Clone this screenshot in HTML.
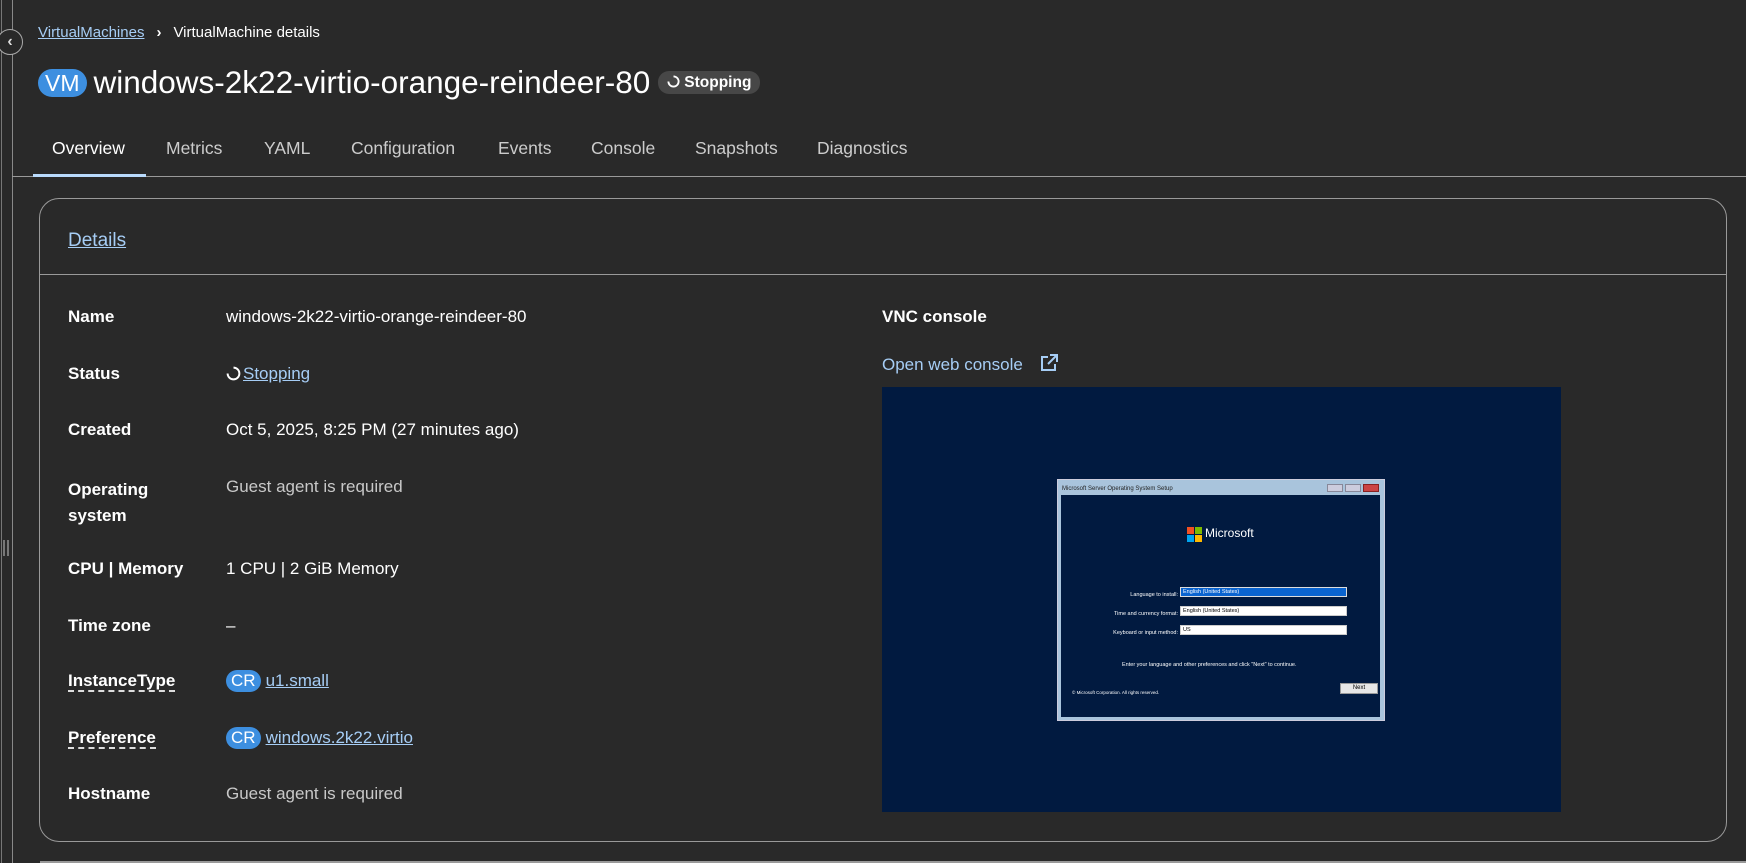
<!DOCTYPE html>
<html><head><meta charset="utf-8"><style>
*{margin:0;padding:0;box-sizing:border-box}
body{width:1746px;height:863px;background:#292929;font-family:"Liberation Sans",sans-serif;color:#fff;position:relative;overflow:hidden}
.a{position:absolute;white-space:nowrap}
.lbl{font-weight:bold;font-size:17px;left:68px}
.val{font-size:17px;left:226px}
.link{color:#a6cdf5;text-decoration:underline}
.cr{display:inline-block;background:#3d8fe0;color:#fff;border-radius:12px;padding:0 5px;font-size:17px;line-height:22px;margin-right:5px}
.dash{border-bottom:2px dashed #ddd}
.tab{font-size:17.5px;color:#ccc;top:138px}
</style></head><body>
<div class="a" style="left:1px;top:0;width:1px;height:863px;background:#777"></div>
<div class="a" style="left:12px;top:0;width:1px;height:863px;background:#888"></div>
<div class="a" style="left:-3px;top:29px;width:26px;height:26px;border:1px solid #aaa;border-radius:50%;background:#292929;font-size:16px;font-weight:bold;text-align:center;line-height:23px;color:#ddd">&#8249;</div>
<div class="a" style="left:3px;top:540px;height:16px;border-left:2px solid #777;border-right:2px solid #777;width:6px"></div>

<div class="a" style="left:38px;top:24px;font-size:15px"><span class="link">VirtualMachines</span><span style="margin:0 12px;font-weight:bold">&#8250;</span>VirtualMachine details</div>
<div class="a" style="left:38px;top:64px;display:flex;align-items:center">
<span style="background:#3d8fe0;border-radius:14px;font-size:23px;padding:0 7px;line-height:28px;margin-right:7px">VM</span>
<span style="font-size:31.5px">windows-2k22-virtio-orange-reindeer-80</span>
<span style="background:#474747;border-radius:11px;font-size:15.5px;padding:0 9px;line-height:23px;margin-left:8px;font-weight:bold"><svg width="13" height="13" viewBox="0 0 14 14" style="vertical-align:-1px;margin-right:4px"><path d="M7 1.5A5.5 5.5 0 1 1 1.5 7" fill="none" stroke="#fff" stroke-width="2"/></svg>Stopping</span></div>

<div class="a tab" style="left:52px;color:#fff">Overview</div>
<div class="a tab" style="left:166px">Metrics</div>
<div class="a tab" style="left:264px">YAML</div>
<div class="a tab" style="left:351px">Configuration</div>
<div class="a tab" style="left:498px">Events</div>
<div class="a tab" style="left:591px">Console</div>
<div class="a tab" style="left:695px">Snapshots</div>
<div class="a tab" style="left:817px">Diagnostics</div>
<div class="a" style="left:12px;top:176px;width:1734px;height:1px;background:#999"></div>
<div class="a" style="left:33px;top:174px;width:113px;height:3px;background:#b9dafc"></div>

<div class="a" style="left:39px;top:198px;width:1688px;height:644px;border:1px solid #999;border-radius:20px"></div>
<div class="a link" style="left:68px;top:230px;font-size:19px">Details</div>
<div class="a" style="left:40px;top:274px;width:1686px;height:1px;background:#999"></div>
<div class="a" style="left:40px;top:861px;width:1706px;height:2px;background:#999"></div>

<div class="a lbl" style="top:307px">Name</div><div class="a val" style="top:307px">windows-2k22-virtio-orange-reindeer-80</div>
<div class="a lbl" style="top:364px">Status</div><div class="a val" style="top:364px"><svg width="15" height="15" viewBox="0 0 14 14" style="vertical-align:-2px;margin-right:2px"><path d="M7 1.5A5.5 5.5 0 1 1 1.5 7" fill="none" stroke="#fff" stroke-width="1.8"/></svg><span class="link">Stopping</span></div>
<div class="a lbl" style="top:420px">Created</div><div class="a val" style="top:420px">Oct 5, 2025, 8:25 PM (27 minutes ago)</div>
<div class="a lbl" style="top:477px;line-height:26px">Operating<br>system</div><div class="a val" style="top:477px;color:#c8c8c8">Guest agent is required</div>
<div class="a lbl" style="top:559px">CPU | Memory</div><div class="a val" style="top:559px">1 CPU | 2 GiB Memory</div>
<div class="a lbl" style="top:616px">Time zone</div><div class="a val" style="top:616px">–</div>
<div class="a lbl" style="top:671px"><span class="dash">InstanceType</span></div><div class="a val" style="top:670px"><span class="cr">CR</span><span class="link">u1.small</span></div>
<div class="a lbl" style="top:728px"><span class="dash">Preference</span></div><div class="a val" style="top:727px"><span class="cr">CR</span><span class="link">windows.2k22.virtio</span></div>
<div class="a lbl" style="top:784px">Hostname</div><div class="a val" style="top:784px;color:#c8c8c8">Guest agent is required</div>

<div class="a" style="left:882px;top:307px;font-size:17px;font-weight:bold">VNC console</div>
<div class="a" style="left:882px;top:354px;font-size:17px;color:#a6cdf5">Open web console
<svg width="18" height="18" viewBox="0 0 18 18" style="margin-left:12px;vertical-align:-2px"><path d="M8 3H2v13h13v-6" fill="none" stroke="#a6cdf5" stroke-width="2"/><path d="M10 1h7v7M17 1L8 10" fill="none" stroke="#a6cdf5" stroke-width="2"/></svg></div>
<div class="a" style="left:882px;top:387px;width:679px;height:425px;background:#011a40"></div>
<div class="a" style="left:1057px;top:479px;width:328px;height:242px;background:#a9c4dc;border:1px solid #ccd"></div>
<div class="a" style="left:1062px;top:486px;font-size:6px;color:#222">Microsoft Server Operating System Setup</div>
<div class="a" style="left:1327px;top:484px;width:16px;height:8px;background:#ccd;border:1px solid #889"></div>
<div class="a" style="left:1345px;top:484px;width:16px;height:8px;background:#ccd;border:1px solid #889"></div>
<div class="a" style="left:1363px;top:484px;width:16px;height:8px;background:#c44;border:1px solid #822"></div>
<div class="a" style="left:1061px;top:495px;width:319px;height:222px;background:#011a40"></div>
<div class="a" style="left:1187px;top:527px;width:15px;height:15px;display:grid;grid-template-columns:7px 7px;gap:1px"><i style="background:#f25022"></i><i style="background:#7fba00"></i><i style="background:#00a4ef"></i><i style="background:#ffb900"></i></div>
<div class="a" style="left:1205px;top:526px;font-size:12px">Microsoft</div>
<div class="a" style="left:1110px;top:586px;font-size:5.5px;text-align:right;width:68px;line-height:19px">Language to install:<br>Time and currency format:<br>Keyboard or input method:</div>
<div class="a" style="left:1180px;top:587px;width:167px;height:10px;background:#0a64d0;border:1px solid #ddd;font-size:5.5px;line-height:8px;padding-left:2px">English (United States)</div>
<div class="a" style="left:1180px;top:606px;width:167px;height:10px;background:#fff;border:1px solid #ccc;font-size:5.5px;line-height:8px;padding-left:2px;color:#000">English (United States)</div>
<div class="a" style="left:1180px;top:625px;width:167px;height:10px;background:#fff;border:1px solid #ccc;font-size:5.5px;line-height:8px;padding-left:2px;color:#000">US</div>
<div class="a" style="left:1122px;top:662px;font-size:5.5px">Enter your language and other preferences and click "Next" to continue.</div>
<div class="a" style="left:1072px;top:690px;font-size:4.5px">© Microsoft Corporation. All rights reserved.</div>
<div class="a" style="left:1340px;top:683px;width:38px;height:11px;background:#e6e6e6;border:1px solid #999;font-size:6px;color:#000;text-align:center;line-height:9px">Next</div>
</body></html>
